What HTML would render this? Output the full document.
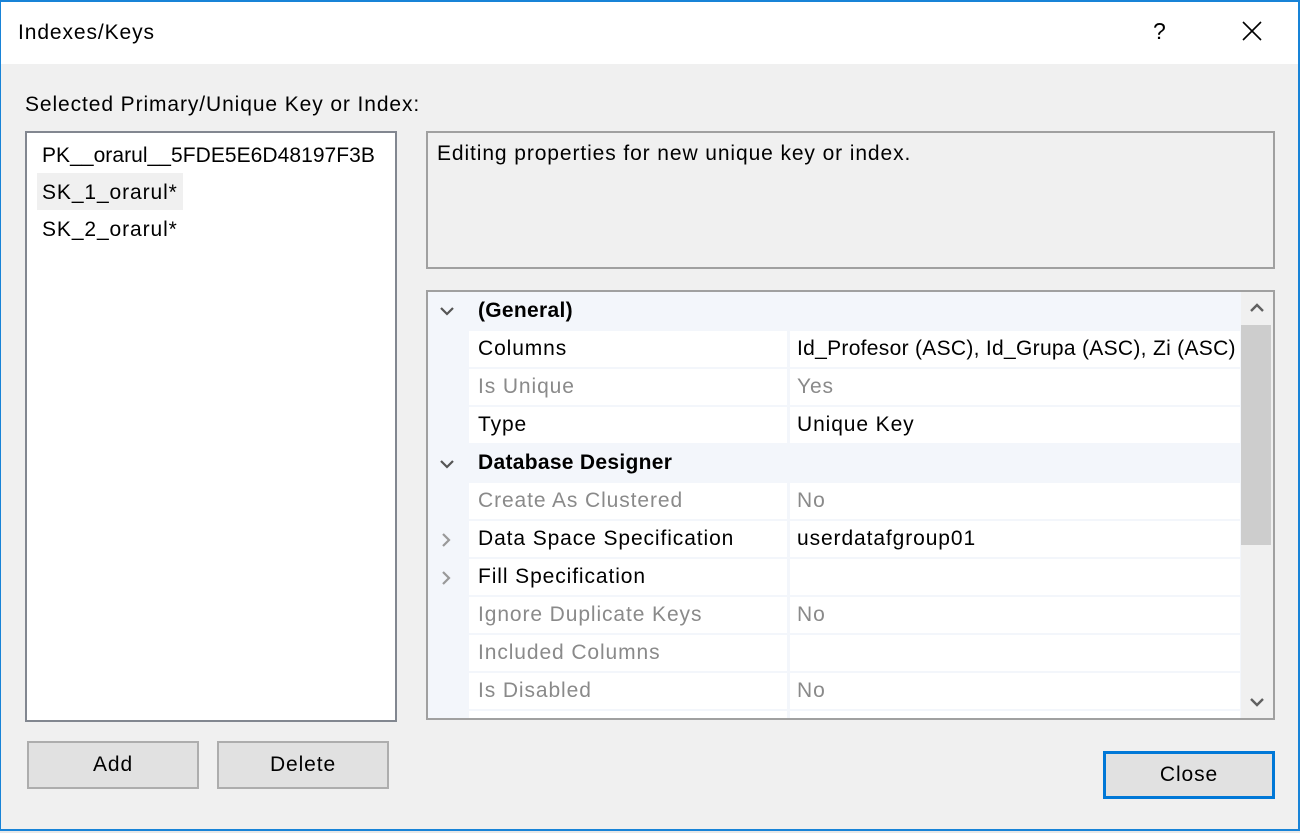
<!DOCTYPE html>
<html><head><meta charset="utf-8"><style>
*{margin:0;padding:0;box-sizing:border-box}
body{width:1300px;height:833px;background:#e8e8e8;position:relative;overflow:hidden;font-family:"Liberation Sans",sans-serif;font-size:21px;letter-spacing:0.9px;color:#000}
.win{position:absolute;left:0;top:0;width:1300px;height:831px;background:#f0f0f0;border:1px solid #1883d7;border-width:2px 2px 2px 1px}
.tb{position:absolute;left:0;top:0;right:0;height:62px;background:#fff}
.a{position:absolute;white-space:nowrap}
.box{position:absolute}
.row{position:absolute;left:469px;width:771px;height:36px;background:#fff}
.nm{position:absolute;left:478px;line-height:38px;white-space:nowrap}
.vl{position:absolute;left:797px;line-height:38px;white-space:nowrap}
.g{color:#8a8a8a}
.sep{position:absolute;left:787px;width:3px;background:#f3f6fb}
.btn{position:absolute;background:#e1e1e1;border:2px solid #adadad;text-align:center;line-height:43px}
</style></head><body>
<div class="win">
<div class="tb"></div>
</div>
<div class="a" style="left:18px;top:21px;font-size:21px">Indexes/Keys</div>
<div class="a" style="left:1153px;top:18px;font-size:23px">?</div>
<svg class="a" style="left:1242px;top:21px" width="20" height="20"><path d="M1 1L19 19M19 1L1 19" stroke="#000" stroke-width="1.6"/></svg>
<div class="a" style="left:25px;top:93px">Selected Primary/Unique Key or Index:</div>
<div class="box" style="left:25px;top:131px;width:372px;height:591px;background:#fff;border:2px solid #828790"></div>
<div class="box" style="left:37px;top:173px;width:146px;height:37px;background:#f0f0f0"></div>
<div class="a" style="left:42px;top:144px;letter-spacing:0.05px">PK__orarul__5FDE5E6D48197F3B</div>
<div class="a" style="left:42px;top:181px">SK_1_orarul*</div>
<div class="a" style="left:42px;top:218px">SK_2_orarul*</div>
<div class="box" style="left:426px;top:131px;width:849px;height:138px;border:2px solid #a0a0a0;background:#f0f0f0"></div>
<div class="a" style="left:437px;top:142px">Editing properties for new unique key or index.</div>
<div class="box" style="left:426px;top:290px;width:849px;height:430px;border:2px solid #a0a0a0;background:#f3f6fb;overflow:hidden">
</div>
<div class="row" style="top:331px"></div><div class="row" style="top:369px"></div><div class="row" style="top:407px"></div>
<div class="row" style="top:483px"></div><div class="row" style="top:521px"></div><div class="row" style="top:559px"></div><div class="row" style="top:597px"></div><div class="row" style="top:635px"></div><div class="row" style="top:673px"></div><div class="row" style="top:711px;height:7px"></div>
<div class="sep" style="top:331px;height:114px"></div>
<div class="sep" style="top:483px;height:235px"></div>
<svg class="a" style="left:439px;top:305px" width="16" height="12"><path d="M2 3L8 9L14 3" stroke="#555" stroke-width="2.2" fill="none"/></svg>
<svg class="a" style="left:439px;top:458px" width="16" height="12"><path d="M2 3L8 9L14 3" stroke="#555" stroke-width="2.2" fill="none"/></svg>
<svg class="a" style="left:440px;top:532px" width="12" height="16"><path d="M3 2L9 8L3 14" stroke="#999" stroke-width="2.2" fill="none"/></svg>
<svg class="a" style="left:440px;top:570px" width="12" height="16"><path d="M3 2L9 8L3 14" stroke="#999" stroke-width="2.2" fill="none"/></svg>
<div class="nm" style="top:292px;font-weight:bold;letter-spacing:0.3px">(General)</div>
<div class="nm" style="top:330px">Columns</div><div class="vl" style="top:330px;width:443px;overflow:hidden;letter-spacing:0.3px">Id_Profesor (ASC), Id_Grupa (ASC), Zi (ASC)</div>
<div class="nm g" style="top:368px">Is Unique</div><div class="vl g" style="top:368px">Yes</div>
<div class="nm" style="top:406px">Type</div><div class="vl" style="top:406px">Unique Key</div>
<div class="nm" style="top:444px;font-weight:bold;letter-spacing:0.3px">Database Designer</div>
<div class="nm g" style="top:482px">Create As Clustered</div><div class="vl g" style="top:482px">No</div>
<div class="nm" style="top:520px">Data Space Specification</div><div class="vl" style="top:520px">userdatafgroup01</div>
<div class="nm" style="top:558px">Fill Specification</div>
<div class="nm g" style="top:596px">Ignore Duplicate Keys</div><div class="vl g" style="top:596px">No</div>
<div class="nm g" style="top:634px">Included Columns</div>
<div class="nm g" style="top:672px">Is Disabled</div><div class="vl g" style="top:672px">No</div>
<div class="box" style="left:1241px;top:292px;width:32px;height:426px;background:#f0f0f0"></div>
<div class="box" style="left:1241px;top:325px;width:30px;height:220px;background:#cdcdcd"></div>
<svg class="a" style="left:1249px;top:302px" width="16" height="12"><path d="M2 9L8 3L14 9" stroke="#606060" stroke-width="2.4" fill="none"/></svg>
<svg class="a" style="left:1249px;top:696px" width="16" height="12"><path d="M2 3L8 9L14 3" stroke="#606060" stroke-width="2.4" fill="none"/></svg>
<div class="btn" style="left:27px;top:741px;width:172px;height:48px">Add</div>
<div class="btn" style="left:217px;top:741px;width:172px;height:48px">Delete</div>
<div class="btn" style="left:1103px;top:751px;width:172px;height:48px;border:3px solid #0078d7;line-height:42px">Close</div>
</body></html>
